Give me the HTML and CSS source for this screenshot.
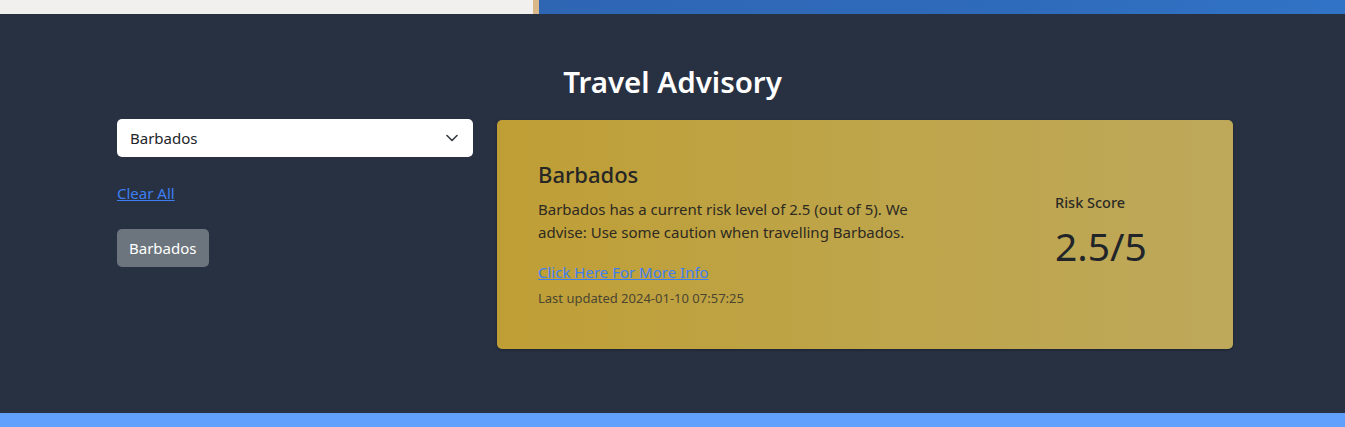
FILE: index.html
```html
<!DOCTYPE html>
<html lang="en">
<head>
<meta charset="utf-8">
<title>Travel Advisory</title>
<link rel="stylesheet" href="styles.css">
</head>
<body>
<div class="hero">
  <div class="hero-left"></div>
  <div class="hero-edge"></div>
  <div class="hero-right"></div>
</div>
<section class="advisory">
  <h1 class="title">Travel Advisory</h1>
  <div class="layout">
    <div class="sidebar">
      <div class="select">
        <span>Barbados</span>
        <svg class="chev" width="12" height="8" viewBox="0 0 12 8"><path d="M1 1.5 L6 6.5 L11 1.5" fill="none" stroke="#343a40" stroke-width="1.6" stroke-linecap="round" stroke-linejoin="round"/></svg>
      </div>
      <a class="clear" href="#">Clear All</a>
      <button class="chip">Barbados</button>
    </div>
    <div class="card">
      <div class="card-main">
        <h2 class="card-title">Barbados</h2>
        <p class="card-text">Barbados has a current risk level of 2.5 (out of 5). We advise: Use some caution when travelling Barbados.</p>
        <a class="more" href="#">Click Here For More Info</a>
        <div class="updated">Last updated 2024-01-10 07:57:25</div>
      </div>
      <div class="score">
        <div class="score-label">Risk Score</div>
        <div class="score-value">2.5/5</div>
      </div>
    </div>
  </div>
</section>
<div class="footer-bar"></div>
</body>
</html>
```
FILE: styles.css
```css
html, body {
  margin: 0;
  padding: 0;
}
body {
  font-family: "Noto Sans", "Open Sans", sans-serif;
  background: #283142;
  overflow: hidden;
}
.hero {
  display: flex;
  height: 14px;
}
.hero-left {
  width: 533px;
  background: #f1f0ee;
}
.hero-edge {
  width: 6px;
  background: #d9b88a;
}
.hero-right {
  flex: 1;
  background: linear-gradient(90deg, #2e66b4, #2f6bbb 60%, #3173c6);
}
.advisory {
  background: #283142;
  height: 399px;
  box-sizing: border-box;
  padding-top: 48px;
}
.title {
  margin: 0;
  text-align: center;
  color: #ffffff;
  font-size: 29.5px;
  font-weight: 600;
  line-height: 40px;
  height: 57px;
}
.layout {
  display: flex;
  gap: 24px;
  width: 1116px;
  margin-left: 117px;
}
.sidebar {
  width: 356px;
  display: flex;
  flex-direction: column;
  align-items: flex-start;
}
.select {
  width: 356px;
  height: 38px;
  box-sizing: border-box;
  background: #fff;
  border-radius: 5px;
  display: flex;
  align-items: center;
  justify-content: space-between;
  padding: 0 15px 0 13px;
  font-size: 15px;
  color: #212529;
}
.clear {
  margin-top: 25px;
  color: #3d7ff2;
  font-size: 15px;
  line-height: 22px;
  text-decoration: underline;
}
.chip {
  margin-top: 25px;
  height: 38px;
  padding: 0 12px;
  background: #6c757d;
  color: #fff;
  border: none;
  border-radius: 5px;
  font-family: inherit;
  font-size: 15px;
}
.card {
  width: 736px;
  height: 229px;
  margin-top: 1px;
  box-sizing: border-box;
  border-radius: 5px;
  background: linear-gradient(90deg, #bf9e35 0%, #bea54a 50%, #bea85a 100%);
  box-shadow: 0 1px 3px rgba(0,0,0,0.3);
  display: flex;
  justify-content: space-between;
  padding: 39px 86px 0 41px;
}
.card-main {
  width: 400px;
}
.card-title {
  margin: 0;
  font-size: 22px;
  font-weight: 500;
  line-height: 30px;
  color: #262626;
}
.card-text {
  margin: 9px 0 0;
  font-size: 15px;
  line-height: 23px;
  color: #2d2a22;
}
.more {
  display: inline-block;
  margin-top: 18px;
  font-size: 15px;
  line-height: 20px;
  color: #3d7ff2;
  text-decoration: underline;
}
.updated {
  margin-top: 5px;
  font-size: 13px;
  line-height: 20px;
  color: #4b4631;
}
.score {
  padding-top: 33px;
  width: 92px;
}
.score-label {
  font-size: 14.5px;
  font-weight: 500;
  color: #2b2a25;
  line-height: 20px;
}
.score-value {
  margin-top: 10px;
  font-size: 39px;
  line-height: 48px;
  color: #212529;
}
.footer-bar {
  height: 14px;
  background: #62a0fd;
}
```
